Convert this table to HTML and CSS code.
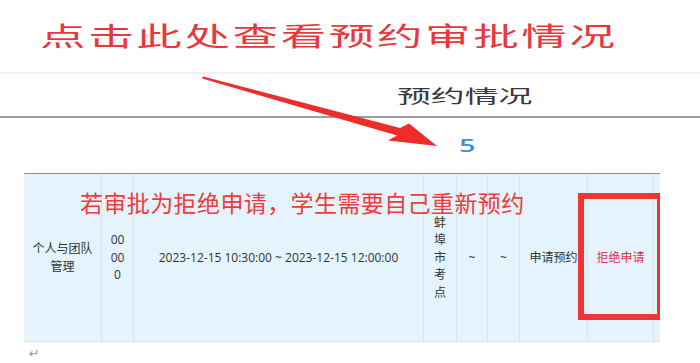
FILE: index.html
```html
<!DOCTYPE html>
<html lang="zh-CN">
<head>
<meta charset="utf-8">
<title>预约情况</title>
<link rel="stylesheet" href="styles.css">
</head>
<body>
<div class="page">
  <div class="title"><span class="title-text">点击此处查看预约审批情况</span></div>
  <div class="tabbar"><span class="tab-text">预约情况</span></div>
  <div class="count"><span class="count-text">5</span></div>
  <div class="table-wrap">
    <div class="grid">
      <div class="cell">个人与团队管理</div>
      <div class="cell break">00000</div>
      <div class="cell">2023-12-15 10:30:00 ~ 2023-12-15 12:00:00</div>
      <div class="cell">蚌埠市考点</div>
      <div class="cell">~</div>
      <div class="cell">~</div>
      <div class="cell">申请预约</div>
      <div class="cell reject">拒绝申请</div>
      <div class="cell edge"></div>
    </div>
    <div class="note">若审批为拒绝申请，学生需要自己重新预约</div>
    <div class="redbox"></div>
  </div>
  <div class="pmark">↵</div>
  <svg class="arrow" width="700" height="363" viewBox="0 0 700 363" aria-hidden="true">
    <path d="M203,76.5 L400,128 L409,123.5 L437,146 L388,140.5 L397,135.5 L202,78.5 Z" fill="#ee2c2c"/>
  </svg>
</div>
</body>
</html>
```
FILE: styles.css
```css
html, body {
  margin: 0;
  padding: 0;
  background: #ffffff;
}
body {
  font-family: "Open Sans", "Noto Sans CJK SC", sans-serif;
}
.page {
  position: relative;
  width: 700px;
  height: 363px;
  overflow: hidden;
}
.title {
  height: 72px;
  box-sizing: border-box;
  padding: 22px 0 0 40px;
}
.title-text {
  display: inline-block;
  font-family: "Noto Sans CJK SC", sans-serif;
  font-size: 26px;
  line-height: 26px;
  font-weight: 400;
  letter-spacing: 1.5px;
  color: #e8383e;
  white-space: nowrap;
  transform: scaleX(1.75);
  transform-origin: 0 0;
}
.tabbar {
  border-top: 2px solid #f0f0f0;
  border-bottom: 2px solid #9c9c9c;
  height: 30px;
  padding: 12px 0 0 397px;
}
.tab-text {
  display: inline-block;
  font-family: "Noto Sans CJK SC", sans-serif;
  font-size: 18px;
  line-height: 18px;
  color: #383838;
  white-space: nowrap;
  transform: scaleX(1.88);
  transform-origin: 0 0;
}
.count {
  height: 55px;
  box-sizing: border-box;
  padding: 17px 0 0 459px;
}
.count-text {
  display: inline-block;
  font-size: 18px;
  line-height: 18px;
  font-weight: 600;
  color: #3d8fdc;
  transform: scaleX(1.6);
  transform-origin: 0 0;
}
.table-wrap {
  position: relative;
  margin-left: 24px;
  width: 636px;
}
.grid {
  display: grid;
  grid-template-columns: 77px 32px 290px 33px 31px 32px 68px 66px 7px;
  height: 169px;
  box-sizing: border-box;
  background: #e5f3fc;
  border-top: 1px solid #8f8f8f;
  border-bottom: 1px solid #d5e5ef;
}
.cell {
  display: flex;
  align-items: center;
  justify-content: center;
  text-align: center;
  padding: 0 8px;
  font-size: 12px;
  line-height: 17.5px;
  color: #333333;
  border-left: 1px solid #d3e4ee;
  min-width: 0;
}
.cell:first-child {
  border-left: none;
}
.break {
  word-break: break-all;
}
.reject {
  color: #d9334a;
}
.edge {
  padding: 0;
}
.note {
  position: absolute;
  left: 56px;
  top: 18px;
  font-family: "Noto Sans CJK SC", sans-serif;
  font-size: 23px;
  line-height: 23px;
  letter-spacing: 0.4px;
  color: #ee3b3b;
  white-space: nowrap;
}
.redbox {
  position: absolute;
  left: 554px;
  top: 20px;
  width: 82px;
  height: 127px;
  box-sizing: border-box;
  border: 6px solid #f03535;
  border-right-width: 3px;
}
.pmark {
  padding: 4px 0 0 29px;
  font-family: "DejaVu Sans", sans-serif;
  font-size: 13px;
  line-height: 16px;
  color: #9a9a9a;
}
.arrow {
  position: absolute;
  left: 0;
  top: 0;
  pointer-events: none;
}
```
